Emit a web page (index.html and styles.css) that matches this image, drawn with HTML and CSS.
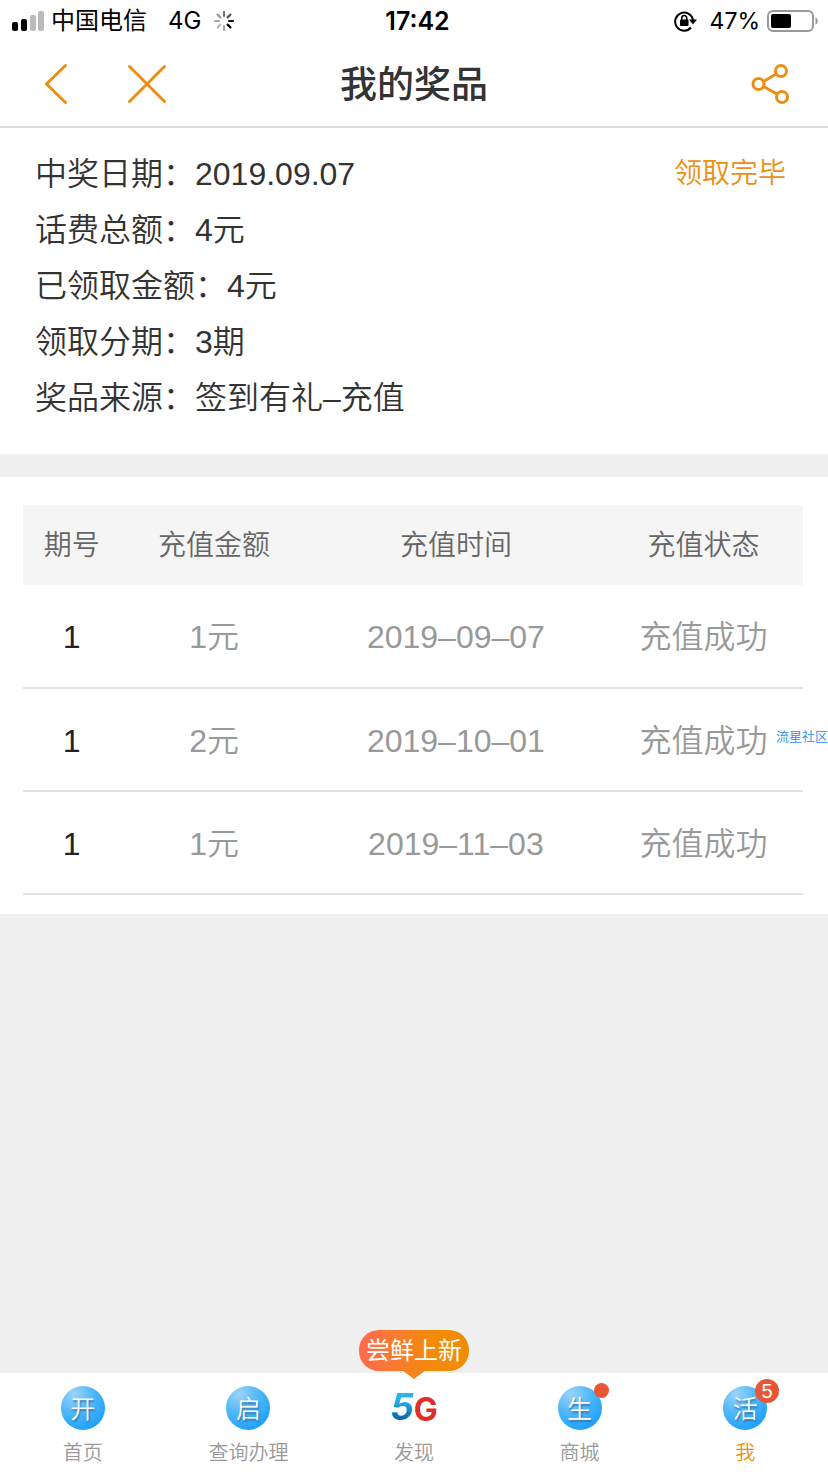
FILE: index.html
```
<!DOCTYPE html>
<html lang="zh-CN">
<head>
  <meta charset="UTF-8">
  <meta name="viewport" content="width=device-width, initial-scale=1">
  <title>我的奖品</title>
  <link rel="stylesheet" href="styles.css">
</head>
<body>
  <!-- Status bar -->
  <div class="status-bar">
    <div class="status-left">
      <svg class="signal" width="32" height="20" viewBox="0 0 32 20">
        <rect x="0" y="11" width="6" height="9" rx="2" fill="#000"/>
        <rect x="9" y="8" width="6" height="12" rx="2" fill="#000"/>
        <rect x="18" y="4" width="6" height="16" rx="2" fill="#bbb"/>
        <rect x="26" y="0" width="6" height="20" rx="2" fill="#bbb"/>
      </svg>
      <span class="carrier">中国电信</span>
      <span class="network">4G</span>
      <svg class="spinner" width="20" height="20" viewBox="0 0 20 20" stroke-width="2.200" stroke-linecap="round">
        <path d="M10 1v4" stroke="#777"/>
        <path d="M16.400 3.600l-2.800 2.800" stroke="#555"/>
        <path d="M19 10h-4" stroke="#111"/>
        <path d="M16.400 16.400l-2.800-2.800" stroke="#000"/>
        <path d="M10 19v-4" stroke="#aaa"/>
        <path d="M3.600 16.400l2.800-2.800" stroke="#bbb"/>
        <path d="M1 10h4" stroke="#aaa"/>
        <path d="M3.600 3.600l2.800 2.800" stroke="#999"/>
      </svg>
    </div>
    <span class="clock">17:42</span>
    <div class="status-right">
      <svg width="24" height="22" viewBox="0 0 24 22">
        <path d="M17 17.500A9 9 0 1 1 19 10" fill="none" stroke="#000" stroke-width="2"/>
        <path d="M15 9.500h8L19 14.500z" fill="#000"/>
        <rect x="6" y="9.500" width="8.500" height="6.500" rx="1" fill="#000"/>
        <path d="M7.800 10V8a2.500 2.500 0 0 1 5 0v2" fill="none" stroke="#000" stroke-width="1.500"/>
      </svg>
      <span class="battery-text">47%</span>
      <svg width="52" height="22" viewBox="0 0 52 22">
        <rect x="1" y="1" width="45" height="20" rx="5" fill="#fff" stroke="#999" stroke-width="2"/>
        <rect x="4" y="4" width="20" height="14" rx="2" fill="#000"/>
        <path d="M48.500 7.500c3 1 3 6 0 7z" fill="#999"/>
      </svg>
    </div>
  </div>

  <!-- Title bar -->
  <header class="header">
    <div class="header-left">
      <button class="icon-button" type="button" aria-label="返回">
        <svg width="24" height="40" viewBox="0 0 24 40"><path d="M21.500 1.500L2.500 20l19 18.500"/></svg>
      </button>
      <button class="icon-button" type="button" aria-label="关闭">
        <svg width="40" height="40" viewBox="0 0 40 40"><path d="M2.500 2.500l35 35M37.500 2.500l-35 35"/></svg>
      </button>
    </div>
    <h1>我的奖品</h1>
    <button class="icon-button" type="button" aria-label="分享">
      <svg width="38" height="40" viewBox="0 0 38 40">
        <circle cx="7.500" cy="20" r="5.500"/>
        <circle cx="30" cy="7" r="5.500"/>
        <circle cx="31" cy="33" r="5.500"/>
        <path d="M12.500 17.500L25 10M12.500 22.500L26 30"/>
      </svg>
    </button>
  </header>

  <main>
    <!-- Prize details -->
    <section class="panel detail">
      <ul class="detail-list">
        <li>中奖日期：2019.09.07</li>
        <li>话费总额：4元</li>
        <li>已领取金额：4元</li>
        <li>领取分期：3期</li>
        <li>奖品来源：签到有礼–充值</li>
      </ul>
      <span class="detail-state">领取完毕</span>
    </section>

    <!-- Recharge records -->
    <section class="panel records">
      <table>
        <thead>
          <tr>
            <th class="col-no">期号</th>
            <th class="col-amount">充值金额</th>
            <th class="col-time">充值时间</th>
            <th class="col-state">充值状态</th>
          </tr>
        </thead>
        <tbody>
          <tr>
            <td class="number">1</td>
            <td>1元</td>
            <td>2019–09–07</td>
            <td>充值成功</td>
          </tr>
          <tr>
            <td class="number">1</td>
            <td>2元</td>
            <td>2019–10–01</td>
            <td>充值成功</td>
          </tr>
          <tr>
            <td class="number">1</td>
            <td>1元</td>
            <td>2019–11–03</td>
            <td>充值成功</td>
          </tr>
        </tbody>
      </table>
      <span class="watermark">流星社区</span>
    </section>
  </main>

  <!-- Bottom tabs -->
  <nav class="tab-bar">
    <a class="tab" href="#">
      <span class="ball">开</span>
      <span>首页</span>
    </a>
    <a class="tab" href="#">
      <span class="ball">启</span>
      <span>查询办理</span>
    </a>
    <a class="tab" href="#">
      <span class="bubble">尝鲜上新</span>
      <span class="logo"><span class="logo-five">5</span><span class="logo-g">G</span></span>
      <span>发现</span>
    </a>
    <a class="tab" href="#">
      <span class="ball">生<span class="dot"></span></span>
      <span>商城</span>
    </a>
    <a class="tab active" href="#">
      <span class="ball">活<span class="badge">5</span></span>
      <span>我</span>
    </a>
  </nav>
</body>
</html>
```
FILE: styles.css
```
* {
  box-sizing: border-box;
}
body {
  margin: 0;
  min-height: 100vh;
  display: flex;
  flex-direction: column;
  font-family: "Liberation Sans", "Noto Sans CJK SC", sans-serif;
  font-weight: 350;
  color: #333;
  background-color: #f0f0f0;
}

/* Status bar */
.status-bar {
  display: grid;
  grid-template-columns: 1fr auto 1fr;
  align-items: center;
  height: 42px;
  padding: 0 9px 0 12px;
  background-color: #fff;
  color: #000;
  font-family: Inter, "Noto Sans CJK SC", sans-serif;
  font-size: 24px;
  font-weight: 400;
  line-height: 28px;
}
.status-left, .status-right {
  display: flex;
  align-items: center;
}
.status-right {
  justify-content: flex-end;
  font-size: 23px;
}
.carrier {
  margin-left: 7px;
}
.network {
  margin-left: 21px;
}
.spinner {
  margin-left: 13px;
}
.clock {
  padding-left: 4px;
  font-size: 25px;
  font-weight: 600;
}
.battery-text {
  margin: 0 7px 0 12px;
}

/* Title bar */
.header {
  display: grid;
  grid-template-columns: 1fr auto 1fr;
  align-items: center;
  height: 86px;
  padding: 0 39px;
  background-color: #fff;
  border-bottom: 2px solid #ddd;
}
.header-left {
  display: flex;
  gap: 59px;
  padding-left: 5px;
}
h1 {
  margin: 0;
  padding-bottom: 4px;
  font-family: "Noto Sans CJK SC", sans-serif;
  font-size: 37px;
  font-weight: 500;
  line-height: 48px;
}
.icon-button {
  display: flex;
  justify-self: end;
  padding: 0;
  border: none;
  background: none;
  cursor: pointer;
}
.icon-button svg {
  fill: none;
  stroke: #ed8f14;
  stroke-width: 3;
  stroke-linecap: round;
}

main {
  flex: 1;
}
.panel {
  background-color: #fff;
}

/* Prize details */
.detail {
  display: flex;
  justify-content: space-between;
  padding: 18px 42px 28px 35px;
  margin-bottom: 23px;
}
.detail-list {
  margin: 0;
  padding: 0;
  list-style: none;
  font-size: 32px;
  line-height: 56px;
}
.detail-state {
  color: #ed8f14;
  font-size: 28px;
  line-height: 56px;
}

/* Recharge records */
.records {
  position: relative;
  padding: 28px 25px 19px 23px;
}
table {
  width: 100%;
  table-layout: fixed;
  border-collapse: collapse;
}
th, td {
  padding: 2px 0 0;
  text-align: center;
  line-height: 40px;
}
th {
  height: 80px;
  background-color: #f5f5f5;
  color: #666;
  font-size: 28px;
  font-weight: 350;
}
td {
  height: 103px;
  border-bottom: 2px solid #e4e4e4;
  color: #999;
  font-size: 32px;
}
.number {
  color: #222;
}
.col-no {
  width: 12.5%;
}
.col-amount {
  width: 24%;
}
.col-time {
  width: 38%;
}
.watermark {
  position: absolute;
  top: 250px;
  right: 0;
  color: #2b8cf0;
  font-size: 13px;
  line-height: 20px;
}

/* Bottom tabs */
.tab-bar {
  display: flex;
  height: 99px;
  background-color: #fff;
}
.tab {
  position: relative;
  flex: 1;
  display: flex;
  flex-direction: column;
  align-items: center;
  gap: 8px;
  padding-top: 13px;
  color: #999;
  font-size: 20px;
  line-height: 30px;
  text-decoration: none;
}
.active {
  color: #ed8f14;
}
.ball {
  position: relative;
  width: 44px;
  height: 44px;
  border-radius: 50%;
  background: radial-gradient(circle at 30% 18%, #9cd3f7 0%, #55b9f8 38%, #119bfc 90%);
  color: #fff;
  font-size: 25px;
  line-height: 46px;
  text-align: center;
  text-shadow: 1px 2px 2px #3177ac;
}
.dot {
  position: absolute;
  top: -3px;
  right: -7px;
  width: 15px;
  height: 15px;
  border-radius: 50%;
  background-color: #e85634;
}
.badge {
  position: absolute;
  top: -7px;
  right: -12px;
  width: 24px;
  height: 24px;
  border-radius: 50%;
  background-color: #e85634;
  font-size: 20px;
  line-height: 24px;
  text-shadow: none;
}
.logo {
  display: flex;
  height: 44px;
  font-family: Inter, sans-serif;
  font-weight: 700;
}
.logo-five {
  background: linear-gradient(#27b5ea 30%, #075fa5 80%);
  background-clip: text;
  color: transparent;
  font-size: 37px;
  font-style: italic;
  line-height: 42px;
}
.logo-g {
  color: #dd2f2c;
  font-size: 32px;
  line-height: 48px;
}
.bubble {
  position: absolute;
  top: -43px;
  padding: 1px 7px 0;
  border-radius: 20px;
  background: linear-gradient(90deg, #ff6a50, #f28c08 70%);
  color: #fff;
  font-size: 24px;
  font-weight: 400;
  line-height: 40px;
  white-space: nowrap;
}
/* Pointer under the bubble */
.bubble::after {
  content: "";
  position: absolute;
  top: 40px;
  left: 50%;
  margin-left: -12px;
  border: 12px solid transparent;
  border-top: 9px solid #f5841d;
  border-bottom: none;
}
```
